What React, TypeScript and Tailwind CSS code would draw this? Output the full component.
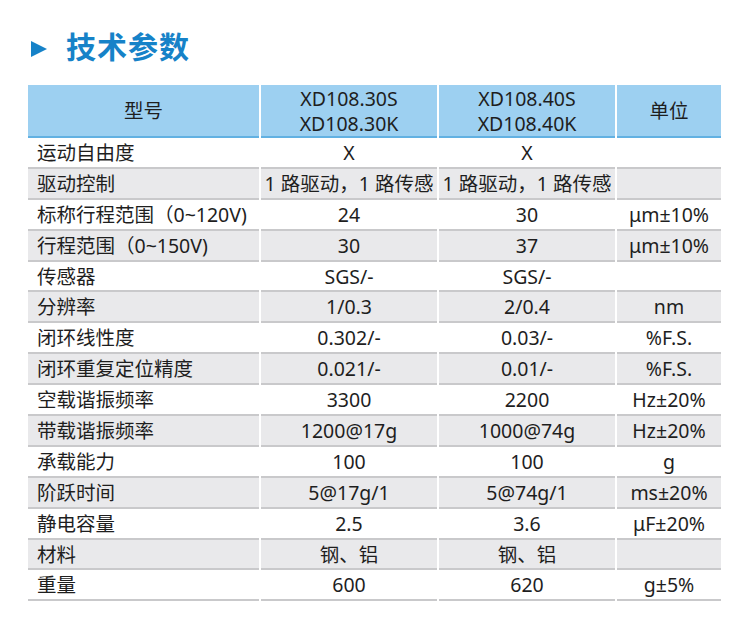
const rows: [string, string, string, string][] = [
  ['运动自由度', 'X', 'X', ''],
  ['驱动控制', '1 路驱动，1 路传感', '1 路驱动，1 路传感', ''],
  ['标称行程范围（0~120V)', '24', '30', 'μm±10%'],
  ['行程范围（0~150V)', '30', '37', 'μm±10%'],
  ['传感器', 'SGS/-', 'SGS/-', ''],
  ['分辨率', '1/0.3', '2/0.4', 'nm'],
  ['闭环线性度', '0.302/-', '0.03/-', '%F.S.'],
  ['闭环重复定位精度', '0.021/-', '0.01/-', '%F.S.'],
  ['空载谐振频率', '3300', '2200', 'Hz±20%'],
  ['带载谐振频率', '1200@17g', '1000@74g', 'Hz±20%'],
  ['承载能力', '100', '100', 'g'],
  ['阶跃时间', '5@17g/1', '5@74g/1', 'ms±20%'],
  ['静电容量', '2.5', '3.6', 'μF±20%'],
  ['材料', '钢、铝', '钢、铝', ''],
  ['重量', '600', '620', 'g±5%'],
];

export default function App() {
  return (
    <div className="w-[750px] h-[642px] bg-white font-['Noto_Sans','Noto_Sans_CJK_SC',sans-serif] text-[#1e1e1e]">
      {/* Title */}
      <div className="flex items-start pt-[29px] pl-[31px] h-[85px]">
        <div className="flex items-center gap-[19px]">
          <svg width="16" height="16" viewBox="0 0 16 16" className="mt-[3px]">
            <polygon points="0,0 16,8 0,16" fill="#1682c8" />
          </svg>
          <span className="text-[30px] leading-[36px] font-bold text-[#1682c8] tracking-[1px]">技术参数</span>
        </div>
      </div>

      {/* Spec table */}
      <div className="ml-[28px] grid grid-cols-[231px_176px_176px_104px] gap-x-[2px] text-[19.5px] leading-[25px]">
        <div className="h-[53px] bg-[#9dd0f1] border-b-2 border-[#62b1e2] flex items-center justify-center">型号</div>
        <div className="h-[53px] bg-[#9dd0f1] border-b-2 border-[#62b1e2] flex flex-col items-center justify-center">
          <span>XD108.30S</span>
          <span>XD108.30K</span>
        </div>
        <div className="h-[53px] bg-[#9dd0f1] border-b-2 border-[#62b1e2] flex flex-col items-center justify-center">
          <span>XD108.40S</span>
          <span>XD108.40K</span>
        </div>
        <div className="h-[53px] bg-[#9dd0f1] border-b-2 border-[#62b1e2] flex items-center justify-center">单位</div>

        {rows.map((r, i) => {
          const bg = i % 2 === 1 ? 'bg-[#e9e9eb]' : 'bg-white';
          return r.map((c, j) => (
            <div
              key={`${i}-${j}`}
              className={`h-[30.9px] border-b-2 border-[#c9c9cb] flex items-center whitespace-nowrap ${bg} ${
                j === 0 ? 'pl-[9px]' : 'justify-center'
              }`}
            >
              {c}
            </div>
          ));
        })}
      </div>
    </div>
  );
}
